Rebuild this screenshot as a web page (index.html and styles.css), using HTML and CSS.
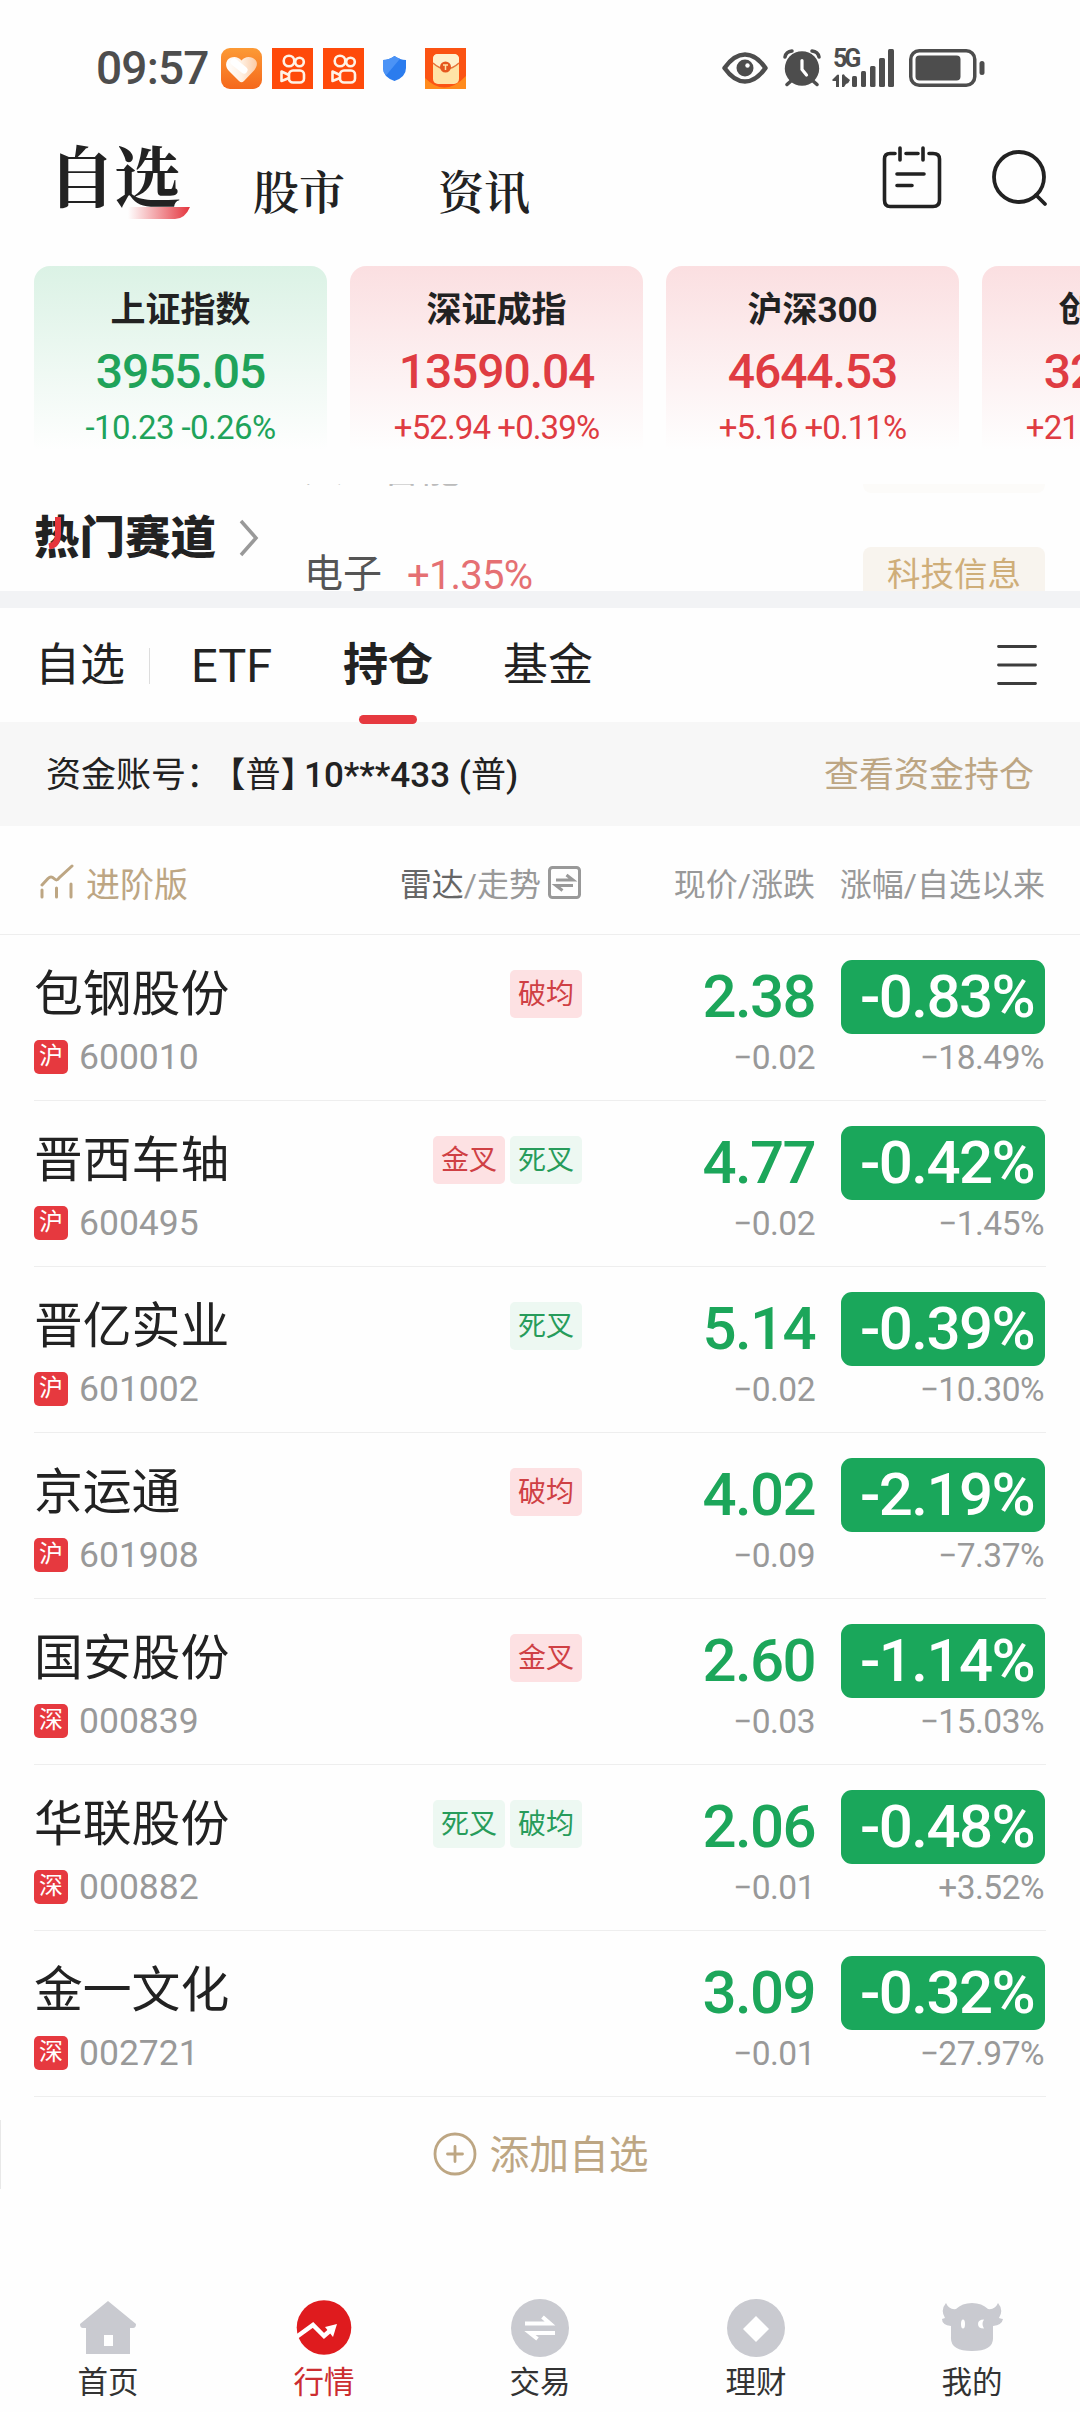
FILE: index.html
```html
<!DOCTYPE html>
<html lang="zh-CN">
<head>
<meta charset="utf-8">
<title>自选</title>
<link rel="stylesheet" href="styles.css">
</head>
<body>
<div class="app">
  <div class="status">
    <span class="clock">09:57</span>
    <div class="notices">
      <svg width="41" height="41" viewBox="0 0 41 41"><defs><linearGradient id="og" x1="0" y1="0" x2="0" y2="1"><stop offset="0" stop-color="#fc9a35"/><stop offset="1" stop-color="#f5681c"/></linearGradient><linearGradient id="hg" x1="0" y1="0" x2="1" y2="0"><stop offset="0" stop-color="#fff"/><stop offset=".5" stop-color="#fff0e2"/><stop offset="1" stop-color="#fccba4"/></linearGradient></defs><rect width="41" height="41" rx="9" fill="url(#og)"/><path d="M20.500 12.500C17 7.500 9.500 8 6.500 12C4 16 5 20 8 23L18 33Q20.500 35.500 23 33L33 22.500C36 19 37 15 34.500 12C31 8 24 7.500 20.500 12.500Z" fill="url(#hg)"/><path d="M13 14L23 22" stroke="#fff" stroke-width="7" stroke-linecap="round"/></svg>
      <svg width="41" height="41" viewBox="0 0 41 41"><rect width="41" height="41" fill="#ff4a0a"/><g fill="none" stroke="#fff3e6" stroke-width="2.600"><circle cx="17" cy="13" r="5.300"/><circle cx="27.500" cy="14" r="4.300"/><rect x="17" y="22.500" width="15" height="12" rx="4"/><path d="M17 27L9.500 23.500V33L17 30"  stroke-linejoin="round"/></g></svg>
      <svg width="41" height="41" viewBox="0 0 41 41"><rect width="41" height="41" fill="#ff4a0a"/><g fill="none" stroke="#fff3e6" stroke-width="2.600"><circle cx="17" cy="13" r="5.300"/><circle cx="27.500" cy="14" r="4.300"/><rect x="17" y="22.500" width="15" height="12" rx="4"/><path d="M17 27L9.500 23.500V33L17 30"  stroke-linejoin="round"/></g></svg>
      <svg width="41" height="41" viewBox="0 0 41 41"><path d="M20.500 8Q26 12 32 12V20Q32 29 20.500 33Q9 29 9 20V12Q15 12 20.500 8Z" fill="#2b7cee"/><path d="M20.500 8Q15 12 9 12V20Q9 24 12 27.500L26 10.800Q23 9.800 20.500 8Z" fill="#4b93f6"/></svg>
      <svg width="41" height="41" viewBox="0 0 41 41"><rect width="41" height="41" fill="#fb5313"/><path d="M0 41V30Q20 50 41 28V41Z" fill="#ff8a1c"/><rect x="8" y="6" width="26" height="30" rx="5" fill="#ffe3a6"/><path d="M8 15Q21 27 34 15V10Q33 6 29 6H13Q8 6 8 11Z" fill="#fff1cd"/><path d="M8 15Q21 27 34 15" fill="none" stroke="#e5743b" stroke-width="1.500"/><circle cx="20.500" cy="19" r="5.500" fill="#e5571f"/><path d="M18 17H23M20.500 17V22" stroke="#ffe3a6" stroke-width="1.500"/></svg>
    </div>
    <div class="signals">
      <svg width="46" height="32" viewBox="0 0 46 32"><path d="M2.500 16Q12 2.500 23 2.500T43.500 16Q34 29.500 23 29.500T2.500 16Z" fill="none" stroke="#4d4d4d" stroke-width="4.500" stroke-linejoin="round"/><circle cx="23" cy="16" r="8.500" fill="#4d4d4d"/><circle cx="25.500" cy="13.500" r="2.200" fill="#fff"/></svg>
      <svg width="38" height="38" viewBox="0 0 38 38"><g fill="none" stroke="#4d4d4d" stroke-width="3.500" stroke-linecap="round"><path d="M2 8Q3 2.500 9 2M36 8Q35 2.500 29 2M8 32L4 35.500M30 32L34 35.500"/></g><circle cx="19" cy="19.500" r="17.200" fill="#4d4d4d"/><path d="M19 11.500V20.500L23.500 26" fill="none" stroke="#fff" stroke-width="3.200" stroke-linecap="round"/></svg>
      <div class="net">
        <span class="net-label">5G</span>
        <svg width="62" height="38" viewBox="0 0 62 38"><g fill="#4d4d4d"><path d="M0 31L5 26Q6 25 7 26V38H4V32H1Z"/><path d="M10 26Q12 24 13 27L18 31Q17 34 14 35L12 38H10Z"/><rect x="20" y="27" width="5" height="11" rx="1.500"/><rect x="29" y="22" width="5" height="16" rx="1.500"/><rect x="38" y="17" width="5.500" height="21" rx="1.500"/><rect x="47" y="9" width="6" height="29" rx="1.500"/><rect x="56" y="0" width="6" height="38" rx="1.500"/></g></svg>
      </div>
      <svg width="76" height="38" viewBox="0 0 76 38"><rect x="1.750" y="1.750" width="64" height="34.500" rx="8.500" fill="none" stroke="#4d4d4d" stroke-width="3.500"/><rect x="6.500" y="6.500" width="45" height="25" rx="4" fill="#4d4d4d"/><rect x="70.500" y="12" width="5" height="14" rx="2.500" fill="#4d4d4d"/></svg>
    </div>
  </div>

  <header class="top">
    <nav class="sections">
      <a class="section current">自选<svg class="swoosh" width="62" height="12" viewBox="0 0 62 12"><defs><linearGradient id="sw"><stop offset="0" stop-color="#e63a42" stop-opacity="0"/><stop offset="1" stop-color="#e4353e"/></linearGradient></defs><path d="M0 0H62Q57 12 47 12H0Z" fill="url(#sw)"/></svg></a>
      <a class="section">股市</a>
      <a class="section">资讯</a>
    </nav>
    <div class="tools">
      <svg width="60" height="64" viewBox="0 0 60 64"><g fill="none" stroke="#222" stroke-width="3.600" stroke-linecap="round"><path d="M13 7.500H8Q2.500 7.500 2.500 13V54Q2.500 60.500 8 60.500H51Q57.500 60.500 57.500 54V13Q57.500 7.500 51 7.500H47M24 7.500H36M18 2V14M41 2V14M15 28H42M15 39.500H30"/></g></svg>
      <svg width="56" height="58" viewBox="0 0 56 58"><g fill="none" stroke="#222" stroke-width="3.800" stroke-linecap="round"><circle cx="27" cy="28" r="25"/><path d="M44 46L53 55"/></g></svg>
    </div>
  </header>

  <section class="indices">
    <article class="index down"><h3>上证指数</h3><b>3955.05</b><span>-10.23 -0.26%</span></article>
    <article class="index up"><h3>深证成指</h3><b>13590.04</b><span>+52.94 +0.39%</span></article>
    <article class="index up"><h3>沪深300</h3><b>4644.53</b><span>+5.16 +0.11%</span></article>
    <article class="index up"><h3>创业板指</h3><b>3289.41</b><span>+21.04 +0.64%</span></article>
  </section>

  <section class="hot">
    <h2>热门赛道<svg class="flame" width="14" height="34" viewBox="0 0 14 34"><path d="M10 1V18Q10 29 1 30.500" fill="none" stroke="#e6353c" stroke-width="6"/></svg></h2>
    <svg class="chevron" width="20" height="38" viewBox="0 0 20 38"><path d="M2 2L17 19L2 36" fill="none" stroke="#999" stroke-width="3.500"/></svg>
    <div class="ticker">
      <div class="tick leaving"><span>人工智能</span><i></i></div>
      <div class="tick"><span>电子</span><em>+1.35%</em><i>科技信息</i></div>
    </div>
  </section>

  <nav class="groups">
    <a>自选</a><span class="bar"></span><a class="latin">ETF</a><a class="active">持仓</a><a>基金</a>
    <svg width="40" height="42" viewBox="0 0 40 42"><path d="M1.500 2.500H38.500M1.500 21H38.500M1.500 39.500H38.500" stroke="#3c3c3c" stroke-width="2.800" stroke-linecap="round"/></svg>
  </nav>

  <div class="account">
    <div class="acct"><span>资金账号：</span><span class="kind">【普】</span><span class="num">10***433 (<span class="thin">普</span>)</span></div>
    <a>查看资金持仓</a>
  </div>

  <div class="cols">
    <div class="pro"><svg width="34" height="36" viewBox="0 0 34 36"><path d="M2 21L8 14.500Q11 11.500 14 14.500T19 14L32 2M2 26V33M16.500 24V33M31 20V33" fill="none" stroke="#bda683" stroke-width="3" stroke-linecap="round"/></svg><span>进阶版</span></div>
    <div class="radar"><span><b>雷达</b>/走势</span><svg width="33" height="33" viewBox="0 0 33 33"><g fill="none" stroke="#999" stroke-width="3"><rect x="1.500" y="1.500" width="30" height="30" rx="3"/><path d="M8 14H25L18.500 9M25 19.500H8L14.500 24.500"/></g></svg></div>
    <div>现价/涨跌</div>
    <div>涨幅/自选以来</div>
  </div>

  <main class="list">
    <div class="row"><div class="name">包钢股份</div><div class="tags"><span class="tag r">破均</span></div><div class="price">2.38</div><div class="pct">-0.83%</div><div class="code"><i>沪</i>600010</div><div class="sub">−0.02</div><div class="sub">−18.49%</div></div>
    <div class="row"><div class="name">晋西车轴</div><div class="tags"><span class="tag r">金叉</span><span class="tag g">死叉</span></div><div class="price">4.77</div><div class="pct">-0.42%</div><div class="code"><i>沪</i>600495</div><div class="sub">−0.02</div><div class="sub">−1.45%</div></div>
    <div class="row"><div class="name">晋亿实业</div><div class="tags"><span class="tag g">死叉</span></div><div class="price">5.14</div><div class="pct">-0.39%</div><div class="code"><i>沪</i>601002</div><div class="sub">−0.02</div><div class="sub">−10.30%</div></div>
    <div class="row"><div class="name">京运通</div><div class="tags"><span class="tag r">破均</span></div><div class="price">4.02</div><div class="pct">-2.19%</div><div class="code"><i>沪</i>601908</div><div class="sub">−0.09</div><div class="sub">−7.37%</div></div>
    <div class="row"><div class="name">国安股份</div><div class="tags"><span class="tag r">金叉</span></div><div class="price">2.60</div><div class="pct">-1.14%</div><div class="code"><i>深</i>000839</div><div class="sub">−0.03</div><div class="sub">−15.03%</div></div>
    <div class="row"><div class="name">华联股份</div><div class="tags"><span class="tag g">死叉</span><span class="tag g">破均</span></div><div class="price">2.06</div><div class="pct">-0.48%</div><div class="code"><i>深</i>000882</div><div class="sub">−0.01</div><div class="sub">+3.52%</div></div>
    <div class="row"><div class="name">金一文化</div><div class="tags"></div><div class="price">3.09</div><div class="pct">-0.32%</div><div class="code"><i>深</i>002721</div><div class="sub">−0.01</div><div class="sub">−27.97%</div></div>
  </main>

  <div class="add">
    <svg width="44" height="44" viewBox="0 0 44 44"><circle cx="22" cy="22" r="20" fill="none" stroke="#bda683" stroke-width="2.800"/><path d="M14.500 22H29.500M22 14.500V29.500" stroke="#bda683" stroke-width="2.800" stroke-linecap="round"/></svg>
    <span>添加自选</span>
  </div>

  <nav class="dock">
    <a><svg width="62" height="60" viewBox="0 0 62 60"><path d="M31 2L59 25Q59 29 56 29H53V55H9V29H6Q3 29 3 25Z" fill="#c9cad0"/><rect x="27" y="36" width="9" height="11" fill="#fff"/></svg>首页</a>
    <a class="on"><svg width="62" height="60" viewBox="0 0 62 60"><circle cx="31" cy="28.500" r="27.300" fill="#df1b1e"/><path d="M2 39L20 26L31 37L39 30" fill="none" stroke="#fff" stroke-width="4.500"/><path d="M32 28L44 25L40 38Z" fill="#fff"/></svg>行情</a>
    <a><svg width="62" height="60" viewBox="0 0 62 60"><circle cx="31" cy="29" r="29" fill="#c9cad0"/><path d="M16 24.500H41L33.500 18M46 34H21L28.500 40" fill="none" stroke="#fff" stroke-width="4"/></svg>交易</a>
    <a><svg width="62" height="60" viewBox="0 0 62 60"><circle cx="31" cy="29" r="29" fill="#c9cad0"/><path d="M31 17L44 30L31 43L18 30Z" fill="#fff"/></svg>理财</a>
    <a><svg width="62" height="60" viewBox="0 0 62 60"><path d="M5 4Q8 11 15 10Q21 4 31 4T47 10Q54 11 57 4Q63 11 58 19Q61 20 62 20Q61 26 52 27L52 38Q53 52 31 52T10 38V27Q1 26 1 20L4 19Q-1 11 5 4Z" fill="#c9cad0"/><ellipse cx="22" cy="25" rx="2" ry="4.500" fill="#fff"/><path d="M43 20.500Q37 20.500 37 25T43 29.500Q40 25 43 20.500Z" fill="#fff"/></svg>我的</a>
  </nav>
</div>
</body>
</html>
```
FILE: styles.css
```css
* { box-sizing: border-box; margin: 0; padding: 0; }
body { background: #fefefe; }
svg { display: block; flex: none; }
i, em { font-style: normal; }
.app {
  width: 1080px; height: 2412px; overflow: hidden;
  display: flex; flex-direction: column;
  font-family: Roboto, "Noto Sans CJK SC", sans-serif;
  color: #222; background: #fefefe; white-space: nowrap;
}
.app > * { flex: none; }

.status { height: 136px; padding: 0 95px 0 96px; display: flex; align-items: center; }
.clock { width: 125px; font-size: 46px; font-weight: 500; line-height: 60px; letter-spacing: -0.8px; color: #4d4d4d; }
.notices { display: flex; gap: 10px; }
.signals { margin-left: auto; display: flex; align-items: center; gap: 15px; }
.net { position: relative; margin-left: -4px; }
.net-label { position: absolute; left: 1px; top: -2px; font: 700 25px/24px Roboto, sans-serif; letter-spacing: -3px; color: #4d4d4d; }

.top { height: 130px; padding: 0 32px 0 52px; display: flex; justify-content: space-between; }
.sections { display: flex; font-family: "Noto Serif CJK SC", "Noto Sans CJK SC", serif; font-weight: 600; }
.section { font-size: 46px; line-height: 60px; padding-top: 23px; width: 185px; }
.current { position: relative; font-size: 67px; font-weight: 700; line-height: 75px; padding-top: 0; width: 201px; text-indent: -4px; letter-spacing: -1px; }
.swoosh { position: absolute; left: 76px; top: 71px; }
.tools { display: flex; gap: 50px; padding-top: 10px; }
.tools svg + svg { margin-top: 3px; }

.indices { display: flex; gap: 23px; padding-left: 34px; height: 214px; overflow: hidden; }
.index { flex: none; width: 293px; height: 194px; border-radius: 16px; display: flex; flex-direction: column; align-items: center; }
.index h3 { font-size: 35px; line-height: 40px; margin-top: 25px; font-weight: 700; }
.index b { font-size: 48px; line-height: 52px; margin-top: 15px; font-weight: 500; letter-spacing: -1.100px; }
.index span { font-size: 33px; line-height: 40px; margin-top: 10px; letter-spacing: -0.6px; }
.down { background: linear-gradient(#dbf2e5, #fefefe 95%); color: #20a35a; }
.up { background: linear-gradient(#fbdfe1, #fefefe 95%); color: #df3c42; }
.up span { letter-spacing: -0.9px; }
.index h3 { color: #222; }

.hot { height: 128px; border-bottom: 17px solid #f2f3f5; padding: 4px 35px 0 34px; display: flex; overflow: hidden; }
.hot h2 { position: relative; width: 205px; font-size: 45.500px; line-height: 60px; font-weight: 900; margin-top: 25px; }
.flame { position: absolute; left: 14px; top: 7px; }
.chevron { margin-top: 35px; }
.ticker { flex: 1; margin-left: 45px; height: 107px; overflow: hidden; }
.tick { display: flex; align-items: center; height: 55px; }
.tick span { font-size: 39px; color: #555; line-height: 55px; margin-top: -1px; }
.tick em { font-size: 40px; color: #e57073; margin-left: 25px; margin-top: 2px; letter-spacing: -0.8px; }
.tick i { margin-left: auto; width: 182px; height: 55px; border-radius: 8px; background: #f8f4ee; color: #cfae79; font-size: 33.500px; line-height: 55px; text-align: center; }
.leaving { margin-top: -46px; margin-bottom: 54px; }
.leaving span { color: #bbb; margin-top: 7px; }
.leaving i { background: #fcfbf9; }

.groups { height: 115px; padding: 0 43px 0 35px; display: flex; align-items: center; font-size: 45px; }
.groups a { line-height: 60px; }
.groups .bar { width: 1px; height: 36px; background: #ddd; margin: 0 41px 0 24px; }
.groups .latin { font-size: 47px; width: 152px; }
.groups .active { position: relative; font-weight: 700; width: 160px; }
.active::after { content: ""; position: absolute; left: 16px; top: 79px; width: 58px; height: 9px; border-radius: 5px; background: #e6393f; }
.groups svg { margin-left: auto; margin-top: -1px; }

.account { height: 104px; margin-top: -1px; background: #f7f7f7; padding: 0 46px 5px; display: flex; align-items: center; justify-content: space-between; font-size: 35px; }
.account a, .add, .pro { color: #bda683; }
.acct { display: flex; }
.kind { margin-left: 7px; font-feature-settings: "halt" 1; }
.num { margin-left: 6px; font-weight: 500; }
.thin { font-weight: 400; }

.cols { height: 109px; border-bottom: 1px solid #eee; padding: 4px 35px 0 40px; display: grid; grid-template-columns: 301px 240px 234px 1fr; align-items: center; justify-items: end; color: #999; font-size: 32px; }
.pro { justify-self: start; display: flex; align-items: center; gap: 12px; font-size: 34px; }
.radar { display: flex; align-items: center; gap: 7px; }
.radar b { font-weight: 400; color: #666; }

.row { height: 166px; margin: 0 34px; border-bottom: 1px solid #eee; padding: 25px 1px 0 0; display: grid; grid-template-columns: 300px 248px 233px 1fr; grid-template-rows: 74px 60px; }
.row > div { justify-self: end; }
.row .name { justify-self: start; font-size: 48.800px; line-height: 69px; }
.tags { display: flex; gap: 5px; padding-top: 10px; }
.tag { width: 72px; height: 48px; border-radius: 5px; font-size: 28px; line-height: 49px; text-align: center; }
.r { background: #fde1e3; color: #cf4044; }
.g { background: #edf8f2; color: #279c5b; }
.price { font-size: 60px; line-height: 74px; font-weight: 500; color: #1ca65a; letter-spacing: -1.600px; }
.row .pct { width: 204px; height: 74px; border-radius: 11px; padding-right: 11px; background: #1aa75b; color: #fff; font-size: 60px; line-height: 74px; font-weight: 500; text-align: right; letter-spacing: -1.600px; }
.row .code { grid-column: 1 / 3; justify-self: start; display: flex; align-items: center; height: 46px; font-size: 35.500px; color: #999; }
.code i { width: 34px; height: 34px; border-radius: 5px; background: #e6393f; color: #fff; font-size: 24px; line-height: 33px; text-align: center; margin-right: 11px; }
.sub { font-size: 33.500px; line-height: 47px; color: #999; letter-spacing: -0.5px; }
.sub:last-child { padding-right: 1px; }

.add { position: relative; height: 117px; padding-bottom: 4px; display: flex; align-items: center; justify-content: center; gap: 12px; font-size: 39.800px; }
.add svg { margin: 1px 0 0 2px; }
.add span { margin-top: -4px; }
.add::before { content: ""; position: absolute; left: 0; top: 23px; width: 1px; height: 69px; background: #e8e8e8; }

.dock { height: 115px; margin-top: 85px; display: grid; grid-template-columns: repeat(5, 1fr); }
.dock a { display: flex; flex-direction: column; align-items: center; font-size: 30.500px; line-height: 44px; color: #333; }
.dock svg { margin-bottom: 2px; }
.dock .on { color: #cc2d30; }
```
